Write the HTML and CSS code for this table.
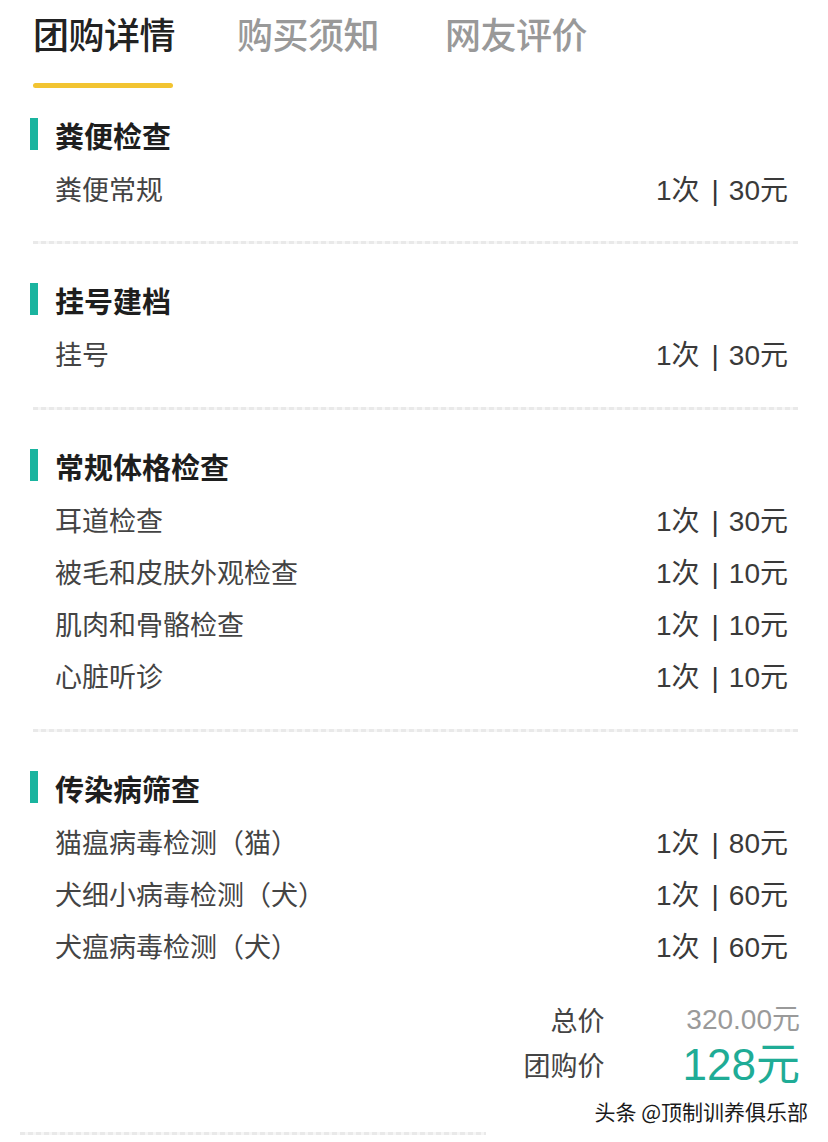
FILE: index.html
```html
<!DOCTYPE html>
<html lang="zh-CN">
<head>
<meta charset="utf-8">
<title>团购详情</title>
<link rel="stylesheet" href="styles.css">
</head>
<body>
<div class="page">
  <nav class="tabs">
    <div class="tab active">团购详情</div>
    <div class="tab t2">购买须知</div>
    <div class="tab t3">网友评价</div>
  </nav>
  <div class="underline"></div>

  <section class="group first">
    <h2 class="group-title">粪便检查</h2>
    <div class="item"><span class="name">粪便常规</span><span class="val">1次<i class="sep">|</i>30元</span></div>
  </section>
  <div class="divider"></div>

  <section class="group">
    <h2 class="group-title">挂号建档</h2>
    <div class="item"><span class="name">挂号</span><span class="val">1次<i class="sep">|</i>30元</span></div>
  </section>
  <div class="divider"></div>

  <section class="group">
    <h2 class="group-title">常规体格检查</h2>
    <div class="item"><span class="name">耳道检查</span><span class="val">1次<i class="sep">|</i>30元</span></div>
    <div class="item"><span class="name">被毛和皮肤外观检查</span><span class="val">1次<i class="sep">|</i>10元</span></div>
    <div class="item"><span class="name">肌肉和骨骼检查</span><span class="val">1次<i class="sep">|</i>10元</span></div>
    <div class="item"><span class="name">心脏听诊</span><span class="val">1次<i class="sep">|</i>10元</span></div>
  </section>
  <div class="divider"></div>

  <section class="group">
    <h2 class="group-title">传染病筛查</h2>
    <div class="item"><span class="name">猫瘟病毒检测（猫）</span><span class="val">1次<i class="sep">|</i>80元</span></div>
    <div class="item"><span class="name">犬细小病毒检测（犬）</span><span class="val">1次<i class="sep">|</i>60元</span></div>
    <div class="item"><span class="name">犬瘟病毒检测（犬）</span><span class="val">1次<i class="sep">|</i>60元</span></div>
  </section>

  <div class="totals">
    <span class="t-label">总价</span><span class="t-orig">320.00元</span>
    <span class="t-label">团购价</span><span class="t-deal">128元</span>
  </div>
  <div class="watermark">头条 @顶制训养俱乐部</div>
  <div class="divider short"></div>
</div>
</body>
</html>
```

FILE: styles.css
```css
* { box-sizing: border-box; margin: 0; padding: 0; }
html, body { background: #ffffff; }
body {
  font-family: "Noto Sans CJK SC", "Noto Sans", sans-serif;
  color: #444;
}
.page {
  width: 828px;
  height: 1142px;
  overflow: hidden;
  padding: 15px 40px 0 30px;
}
.tabs {
  display: flex;
  padding-left: 3px;
}
.tab {
  font-size: 36px;
  line-height: 36px;
  height: 36px;
  color: #999;
  font-weight: 500;
  letter-spacing: -0.5px;
}
.tab.active { color: #222; }
.tab.t2 { margin-left: 62px; }
.tab.t3 { margin-left: 66px; }
.underline {
  width: 140px;
  height: 5px;
  margin: 32px 0 0 3px;
  border-radius: 3px;
  background: #f2c431;
}
.group { padding-top: 29px; padding-bottom: 28px; }
.group.first { padding-top: 20px; padding-bottom: 27px; }
.group-title {
  position: relative;
  height: 54px;
  line-height: 54px;
  font-size: 29px;
  font-weight: 700;
  color: #1e1e1e;
  padding-left: 25px;
}
.group-title::before {
  content: "";
  position: absolute;
  left: 0;
  top: 10px;
  width: 8px;
  height: 32px;
  background: #1ab49f;
}
.item {
  display: flex;
  justify-content: space-between;
  align-items: center;
  height: 52px;
  padding-left: 25px;
  font-size: 27px;
  color: #444;
}
.val {
  font-family: "Liberation Sans", "Noto Sans CJK SC", sans-serif;
  font-size: 28px;
  color: #3a3a3a;
}
.sep {
  font-style: normal;
  display: inline-block;
  margin: 0 10px 0 12px;
  color: #333;
}
.divider {
  height: 3px;
  margin-left: 3px;
  margin-right: -10px;
  background: repeating-linear-gradient(90deg, #e9e9e9 0 5px, #f6f6f6 5px 8px);
}
.divider.short {
  margin-left: -10px;
  width: 466px;
  margin-top: 8px;
}
.totals {
  display: grid;
  grid-template-columns: 1fr auto;
  column-gap: 78px;
  align-items: center;
  margin-top: 1px;
  margin-right: -12px;
  padding-left: 480px;
}
.t-label {
  text-align: right;
  font-size: 27px;
  color: #444;
  line-height: 40px;
}
.t-orig {
  text-align: right;
  font-family: "Liberation Sans", "Noto Sans CJK SC", sans-serif;
  font-size: 28px;
  color: #9a9a9a;
  line-height: 40px;
}
.t-deal {
  text-align: right;
  font-family: "Liberation Sans", "Noto Sans CJK SC", sans-serif;
  font-size: 44px;
  color: #1fac96;
  line-height: 50px;
}
.watermark {
  text-align: right;
  margin-right: -20px;
  margin-top: 8px;
  font-size: 21px;
  line-height: 26px;
  color: #1a1a1a;
  text-shadow: 0 0 2px #fff, 1px 1px 0 #fff;
}
```
